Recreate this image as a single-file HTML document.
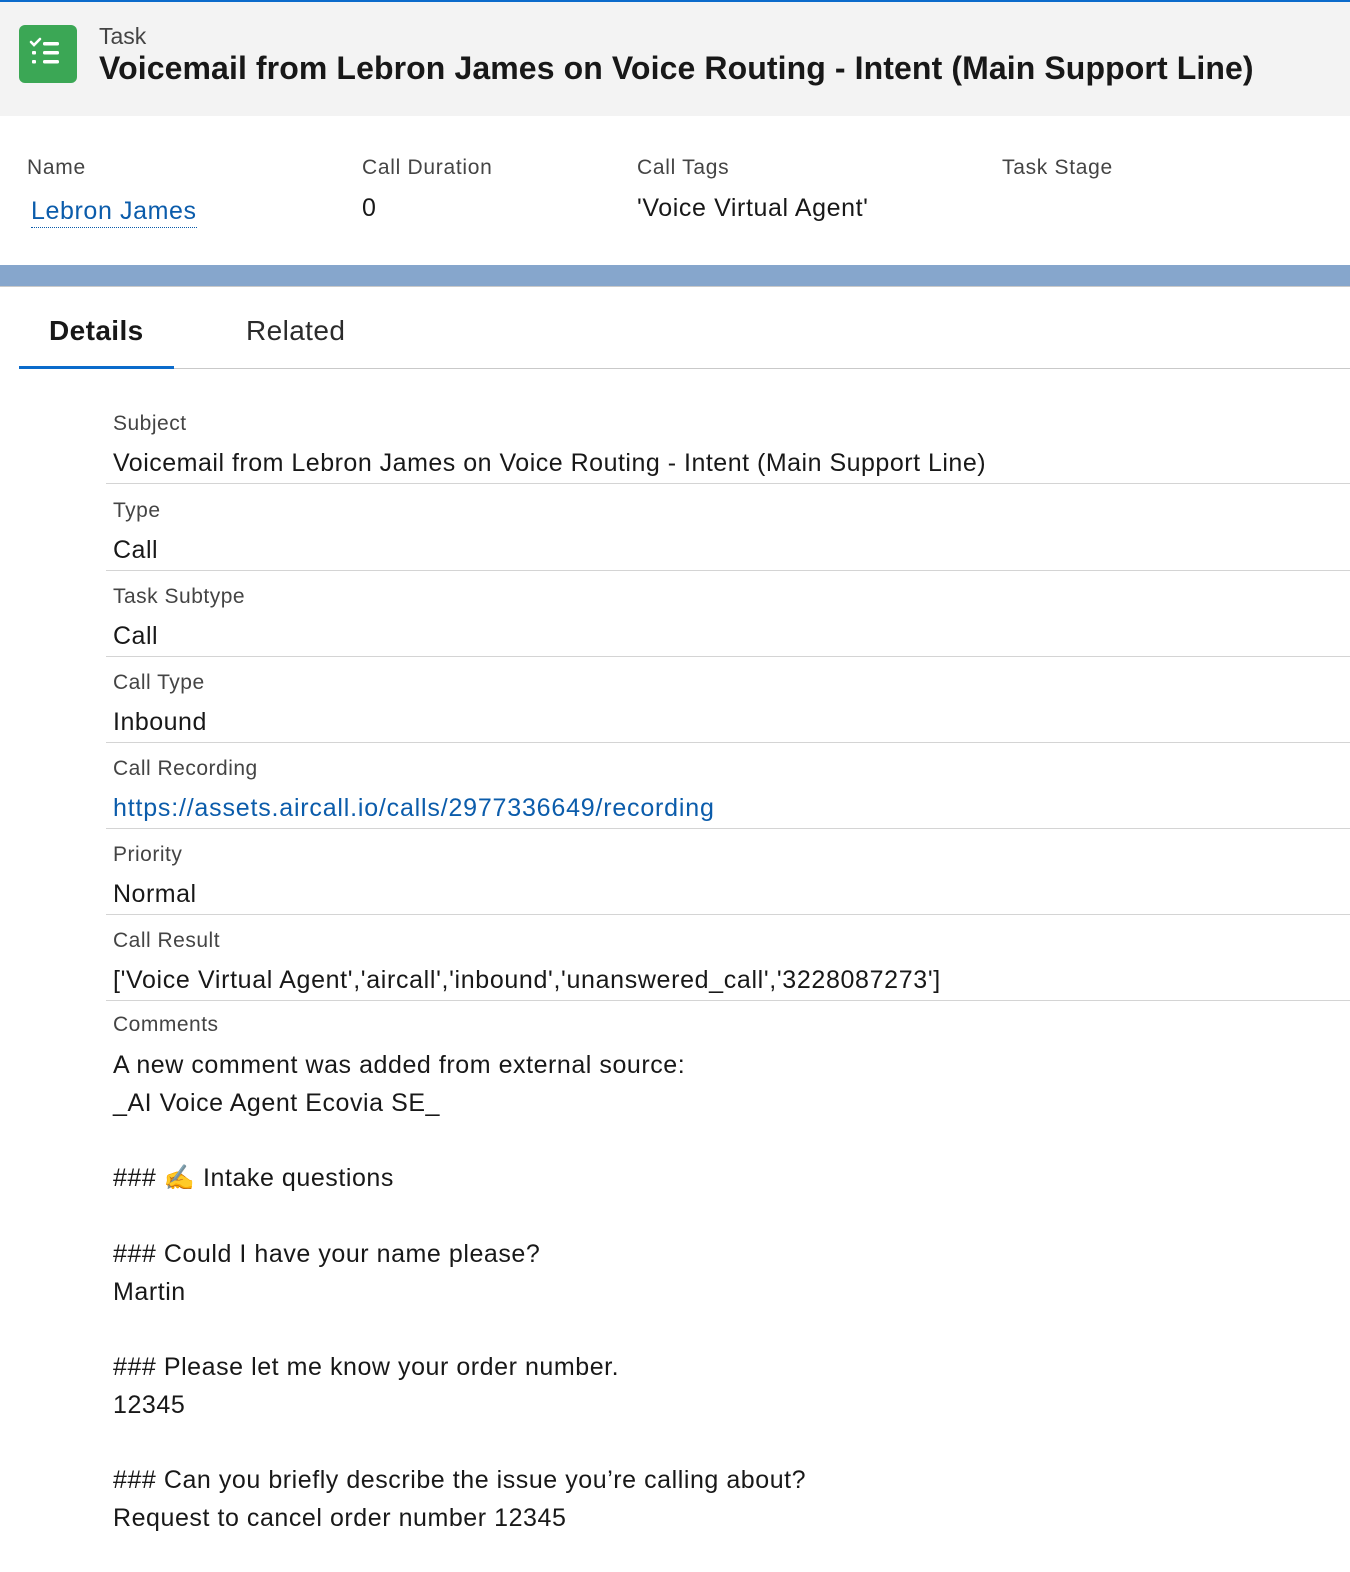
<!DOCTYPE html>
<html><head><meta charset="utf-8"><style>
*{margin:0;padding:0;box-sizing:border-box}
body{width:1350px;height:1572px;background:#fff;font-family:"Liberation Sans","Noto Sans CJK JP",sans-serif;color:#181818;position:relative;overflow:hidden}
.top{position:absolute;left:0;top:0;width:1350px;height:116px;background:#f3f3f3;border-top:2px solid #0b6bcb}
.icon{position:absolute;left:19px;top:23px;width:58px;height:58px;background:#3ba755;border-radius:6px}
.t1{position:absolute;left:99px;top:21px;font-size:23px;color:#444}
.t2{position:absolute;left:99px;top:48px;font-size:32px;font-weight:bold;color:#181818;letter-spacing:0.1px;white-space:nowrap}
.lab{position:absolute;font-size:21px;color:#444;letter-spacing:0.7px}
.val{position:absolute;font-size:25px;color:#181818;letter-spacing:0.6px}
.band{position:absolute;left:0;top:265px;width:1350px;height:22px;background:#86a6cc;border-bottom:1px solid #c9c9c9}
.tab{position:absolute;top:315px;font-size:28px;letter-spacing:0.4px}
.row{position:absolute;left:106px;width:1244px;border-bottom:1px solid #d4d4d4;height:86px}
.row .l{position:absolute;left:7px;top:14px;font-size:21px;color:#444;letter-spacing:0.5px}
.row .v{position:absolute;left:7px;top:51px;font-size:25px;color:#181818;white-space:nowrap;letter-spacing:0.5px}
.cm{position:absolute;left:113px;font-size:25px;white-space:nowrap;letter-spacing:0.55px}
</style></head><body>
<div class="top">
<div class="icon"><svg width="58" height="58" viewBox="0 0 58 58"><path d="M12 17l3 3 6-6" stroke="#fff" stroke-width="2.6" fill="none" stroke-linecap="round"/><rect x="24" y="17" width="16" height="3.5" rx="1.5" fill="#fff"/><rect x="13" y="26" width="4" height="3.5" rx="1" fill="#fff"/><rect x="24" y="26" width="16" height="3.5" rx="1.5" fill="#fff"/><rect x="13" y="35" width="4" height="3.5" rx="1" fill="#fff"/><rect x="24" y="35" width="16" height="3.5" rx="1.5" fill="#fff"/></svg></div>
<div class="t1">Task</div>
<div class="t2">Voicemail from Lebron James on Voice Routing - Intent (Main Support Line)</div>
</div>
<div class="lab" style="left:27px;top:156px">Name</div>
<div class="val" style="left:31px;top:197px;color:#0b5cab;border-bottom:1px dotted #0b5cab;padding-bottom:1px">Lebron James</div>
<div class="lab" style="left:362px;top:156px">Call Duration</div>
<div class="val" style="left:362px;top:194px">0</div>
<div class="lab" style="left:637px;top:156px">Call Tags</div>
<div class="val" style="left:637px;top:194px">'Voice Virtual Agent'</div>
<div class="lab" style="left:1002px;top:156px">Task Stage</div>
<div class="band"></div>
<div class="tab" style="left:49px;font-weight:bold">Details</div>
<div class="tab" style="left:246px;color:#2b2b2b">Related</div>
<div style="position:absolute;left:19px;top:368px;width:1331px;height:1px;background:#c9c9c9"></div>
<div style="position:absolute;left:19px;top:366px;width:155px;height:3px;background:#0b6bcb"></div>
<div class="row" style="top:398px"><div class="l">Subject</div><div class="v">Voicemail from Lebron James on Voice Routing - Intent (Main Support Line)</div></div>
<div class="row" style="top:485px"><div class="l">Type</div><div class="v">Call</div></div>
<div class="row" style="top:571px"><div class="l">Task Subtype</div><div class="v">Call</div></div>
<div class="row" style="top:657px"><div class="l">Call Type</div><div class="v">Inbound</div></div>
<div class="row" style="top:743px"><div class="l">Call Recording</div><div class="v" style="color:#0b5cab;letter-spacing:0.8px">https://assets.aircall.io/calls/2977336649/recording</div></div>
<div class="row" style="top:829px"><div class="l">Priority</div><div class="v">Normal</div></div>
<div class="row" style="top:915px"><div class="l">Call Result</div><div class="v" style="letter-spacing:0.65px">['Voice Virtual Agent','aircall','inbound','unanswered_call','3228087273']</div></div>
<div class="lab" style="left:113px;top:1013px;font-size:21px;letter-spacing:0.5px">Comments</div>
<div class="cm" style="top:1051px">A new comment was added from external source:</div>
<div class="cm" style="top:1089px">_AI Voice Agent Ecovia SE_</div>
<div class="cm" style="top:1164px">### ✍️ Intake questions</div>
<div class="cm" style="top:1240px">### Could I have your name please?</div>
<div class="cm" style="top:1278px">Martin</div>
<div class="cm" style="top:1353px">### Please let me know your order number.</div>
<div class="cm" style="top:1391px">12345</div>
<div class="cm" style="top:1466px">### Can you briefly describe the issue you’re calling about?</div>
<div class="cm" style="top:1504px">Request to cancel order number 12345</div>
</body></html>
